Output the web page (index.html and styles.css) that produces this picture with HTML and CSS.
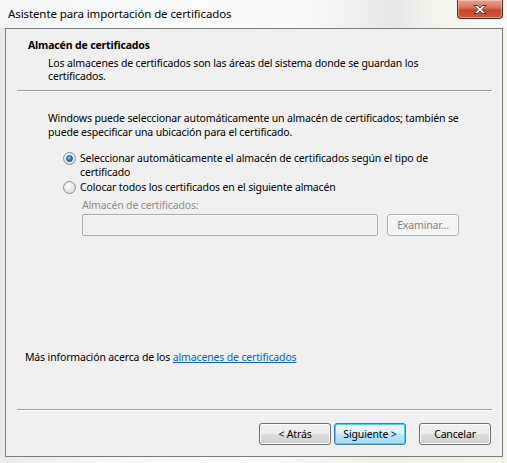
FILE: index.html
```html
<!DOCTYPE html>
<html lang="es">
<head>
    <meta charset="UTF-8">
    <title>Asistente para importación de certificados</title>
    <link rel="stylesheet" href="styles.css">
</head>
<body>
    <div class="window">
        <div class="titlebar">
            <span class="title">Asistente para importación de certificados</span>
            <div class="close-btn">
                <svg width="16" height="11" viewBox="0 0 16 11">
                    <path d="M2 1.5 L5.5 1.5 L8 4 L10.5 1.5 L14 1.5 L10 5.5 L14 9.5 L10.5 9.5 L8 7 L5.5 9.5 L2 9.5 L6 5.5 Z" fill="#fff" stroke="#3b3b3b" stroke-width="1" stroke-linejoin="round"/>
                </svg>
            </div>
        </div>

        <div class="client">
            <div class="wizard-header">
                <div class="wizard-title">Almacén de certificados</div>
                <div class="wizard-desc">Los almacenes de certificados son las áreas del sistema donde se guardan los<br>certificados.</div>
            </div>
            <div class="separator"></div>

            <div class="wizard-body">
                <p class="intro">Windows puede seleccionar automáticamente un almacén de certificados; también se<br>puede especificar una ubicación para el certificado.</p>

                <div class="options">
                    <label class="option">
                        <span class="radio checked"></span>
                        <span>Seleccionar automáticamente el almacén de certificados según el tipo de<br>certificado</span>
                    </label>
                    <label class="option">
                        <span class="radio"></span>
                        <span>Colocar todos los certificados en el siguiente almacén</span>
                    </label>

                    <div class="store-field">
                        <div class="field-label">Almacén de certificados:</div>
                        <div class="field-row">
                            <div class="text-input"></div>
                            <button class="btn disabled">Examinar...</button>
                        </div>
                    </div>
                </div>
            </div>

            <div class="more-info">Más información acerca de los <a href="#">almacenes de certificados</a></div>

            <div class="separator"></div>

            <div class="footer">
                <button class="btn">&lt; Atrás</button>
                <button class="btn default">Siguiente &gt;</button>
                <button class="btn cancel">Cancelar</button>
            </div>
        </div>
    </div>
</body>
</html>
```

FILE: styles.css
```css
* {
    margin: 0;
    padding: 0;
    box-sizing: border-box;
}

body {
    width: 507px;
    height: 463px;
    overflow: hidden;
    font-family: "Noto Sans", "Open Sans", sans-serif;
    font-size: 10.5px;
    letter-spacing: -0.15px;
    color: #000;
    background: linear-gradient(90deg, #e9ece6 0%, #f7f8f4 20%, #fbfbf8 50%, #eef0e8 75%, #f3f4ea 100%);
}

.window {
    display: flex;
    flex-direction: column;
    height: 463px;
}

/* barra de titulo */
.titlebar {
    height: 28px;
    display: flex;
    align-items: flex-start;
    justify-content: space-between;
    background: linear-gradient(90deg, #f4f6f7 0%, #fdfdfd 40%, #fafafa 60%, #e6e8e6 78%, #f4f3ea 85%, #fafafa 100%);
}

.title {
    font-size: 11.5px;
    letter-spacing: -0.1px;
    padding: 6px 0 0 8px;
    color: #000;
}

.close-btn {
    width: 46px;
    height: 19px;
    margin-right: 4px;
    border: 1px solid #5a2a20;
    border-top: none;
    border-radius: 0 0 4px 4px;
    background: linear-gradient(#e7a393 0%, #d9705a 45%, #c5452b 55%, #d2583d 100%);
    box-shadow: inset 0 0 0 1px rgba(255, 255, 255, 0.35);
    display: flex;
    align-items: center;
    justify-content: center;
}

.client {
    flex: 1;
    margin: 0 4px 6px 5px;
    border: 1px solid #7b7b7b;
    background: #f0f0f0;
    display: flex;
    flex-direction: column;
}

.wizard-header {
    padding: 10px 0 0 22px;
    height: 61px;
}

.wizard-title {
    font-weight: bold;
    line-height: 13px;
    margin-bottom: 5px;
}

.wizard-desc {
    padding-left: 20px;
    line-height: 13px;
}

.separator {
    height: 2px;
    margin: 0 10px 0 11px;
    border-top: 1px solid #a0a0a0;
    border-bottom: 1px solid #fff;
}

.wizard-body {
    padding: 19px 0 0 42px;
    flex: 1;
}

.intro {
    line-height: 14px;
}

.options {
    padding-left: 15px;
    margin-top: 12px;
}

.option {
    display: flex;
    align-items: flex-start;
    gap: 4px;
    line-height: 14px;
    margin-bottom: 1px;
}

.radio {
    width: 13px;
    height: 13px;
    margin-top: 1px;
    border-radius: 50%;
    border: 1px solid #8e8f8f;
    background: radial-gradient(circle at 40% 35%, #fdfdfd 0%, #e4e4e4 60%, #d0d0d0 100%);
    position: relative;
    flex-shrink: 0;
}

.radio.checked::after {
    content: "";
    position: absolute;
    left: 2px;
    top: 2px;
    width: 7px;
    height: 7px;
    border-radius: 50%;
    background: radial-gradient(circle at 40% 35%, #a9e4fb 0%, #2b8cce 45%, #0d4f8a 100%);
    border: 1px solid #1c5180;
    box-sizing: border-box;
}

.store-field {
    padding-left: 19px;
    margin-top: 4px;
}

.field-label {
    color: #8d8d8d;
    line-height: 14px;
}

.field-row {
    display: flex;
    align-items: center;
    gap: 9px;
    margin-top: 2px;
}

.text-input {
    width: 296px;
    height: 22px;
    border: 1px solid #abadb3;
    border-radius: 2px;
    background: #f0f0f0;
    box-shadow: inset 0 0 0 1px #f5f5f5;
}

.btn {
    width: 72px;
    height: 22px;
    font-family: inherit;
    font-size: 10.5px;
    letter-spacing: -0.15px;
    color: #000;
    border: 1px solid #707070;
    border-radius: 3px;
    background: linear-gradient(#f2f2f2 0%, #ebebeb 50%, #dddddd 51%, #cfcfcf 100%);
    box-shadow: inset 0 0 0 1px #fcfcfc;
}

.btn.disabled {
    color: #838383;
    border-color: #adb2b5;
    background: #f4f4f4;
    box-shadow: inset 0 0 0 1px #fbfbfb;
}

.btn.default {
    border-color: #3c7fb1;
    background: linear-gradient(#eaf6fd 0%, #d9f0fc 50%, #bee6fd 51%, #a7d9f5 100%);
    box-shadow: inset 0 0 0 1px #48d0fb;
}

.more-info {
    padding: 0 0 45px 19px;
    line-height: 14px;
}

.more-info a {
    color: #0066cc;
}

.footer {
    height: 45px;
    display: flex;
    align-items: center;
    justify-content: flex-end;
    gap: 3px;
    padding-right: 11px;
}

.btn.cancel {
    margin-left: 10px;
}
```
